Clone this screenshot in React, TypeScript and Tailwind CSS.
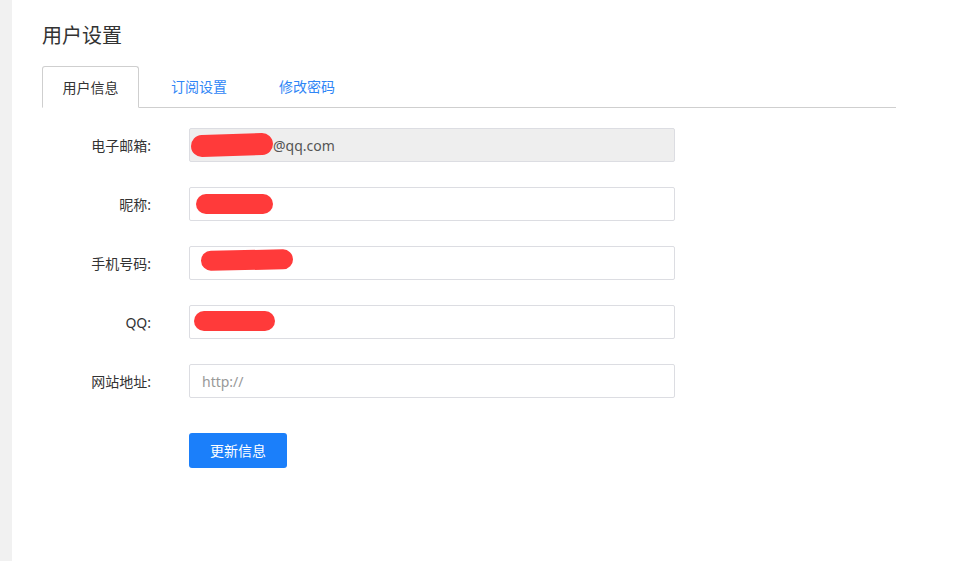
import React from 'react';

const fields = [
    { label: '电子邮箱:', kind: 'email' },
    { label: '昵称:', kind: 'nick' },
    { label: '手机号码:', kind: 'phone' },
    { label: 'QQ:', kind: 'qq' },
    { label: '网站地址:', kind: 'url' },
];

const App: React.FC = () => {
    const renderField = (kind: string) => {
        if (kind === 'email') {
            return (
                <div className="w-[486px] h-[34px] border border-[#dcdde2] bg-[#eeeeee] rounded-[2px] flex items-center text-[14px] text-[#555]">
                    <span className="inline-block bg-[#ff3a3a] rounded-full w-[82px] h-[22px] ml-[1px] -rotate-2"></span>
                    <span>@qq.com</span>
                </div>
            );
        }
        if (kind === 'url') {
            return (
                <div className="w-[486px] h-[34px] border border-[#dcdde2] bg-white rounded-[2px] flex items-center pl-[12px] text-[14px] text-[#999]">
                    http://
                </div>
            );
        }
        const blob =
            kind === 'nick' ? 'w-[77px] h-[20px] ml-[6px]' :
            kind === 'phone' ? 'w-[92px] h-[20px] ml-[11px] -mt-[6px] -rotate-1' :
            'w-[81px] h-[20px] ml-[4px] -mt-[2px]';
        return (
            <div className="w-[486px] h-[34px] border border-[#dcdde2] bg-white rounded-[2px] flex items-center">
                <span className={`inline-block bg-[#ff3a3a] rounded-full ${blob}`}></span>
            </div>
        );
    };

    return (
        <div className="flex min-h-[561px] bg-white text-[#333]" style={{ fontFamily: '"Noto Sans", "Noto Sans CJK SC", sans-serif' }}>
            <div className="w-[12px] shrink-0 bg-[#f1f1f1]"></div>
            <div className="flex-1 pl-[30px] pt-[22px]">
                <h1 className="text-[20px] leading-[28px] text-[#333]">用户设置</h1>

                <div className="mt-[16px] w-[854px] flex border-b border-[#cfcfcf] text-[14px]">
                    <div className="w-[97px] h-[42px] -mb-px flex items-center justify-center border border-[#cfcfcf] border-b-white bg-white rounded-t-[3px] text-[#333]">
                        用户信息
                    </div>
                    <div className="w-[120px] h-[41px] flex items-center justify-center text-[#2f86f6]">订阅设置</div>
                    <div className="w-[96px] h-[41px] flex items-center justify-center text-[#2f86f6]">修改密码</div>
                </div>

                <div className="mt-[20px] flex flex-col gap-[25px]">
                    {fields.map(f => (
                        <div key={f.kind} className="flex items-center">
                            <label className="w-[109px] text-right text-[14px] text-[#333]">{f.label}</label>
                            <div className="ml-[38px]">{renderField(f.kind)}</div>
                        </div>
                    ))}
                </div>

                <div className="mt-[35px] pl-[147px]">
                    <button className="w-[98px] h-[35px] rounded-[3px] bg-[#1b7ffa] text-white text-[14px]">更新信息</button>
                </div>
            </div>
        </div>
    );
};

export default App;
